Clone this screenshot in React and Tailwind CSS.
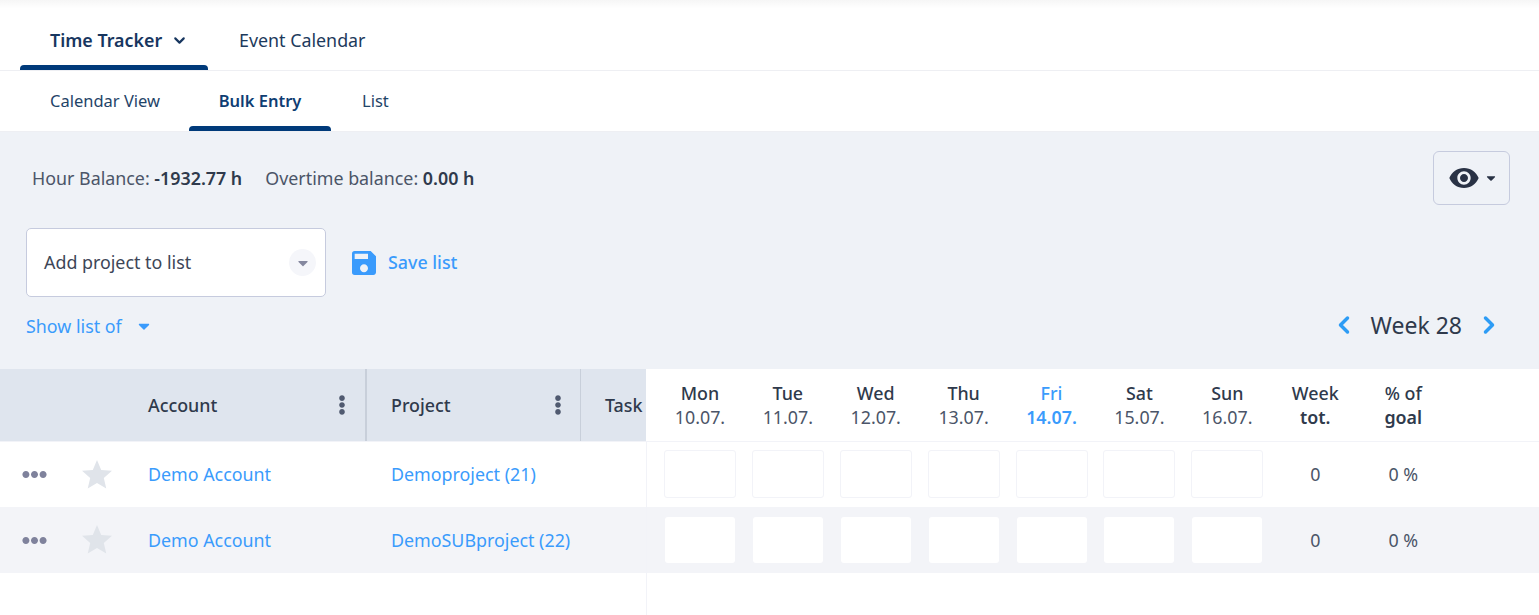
import { ChevronDown, ChevronLeft, ChevronRight } from "lucide-react";
import { FaCaretDown, FaEllipsisH, FaEllipsisV } from "react-icons/fa";
import { MdSave, MdVisibility } from "react-icons/md";

const days = [
  { name: "Mon", date: "10.07." },
  { name: "Tue", date: "11.07." },
  { name: "Wed", date: "12.07." },
  { name: "Thu", date: "13.07." },
  { name: "Fri", date: "14.07.", today: true },
  { name: "Sat", date: "15.07." },
  { name: "Sun", date: "16.07." },
];

const rows = [
  { account: "Demo Account", project: "Demoproject (21)" },
  { account: "Demo Account", project: "DemoSUBproject (22)", striped: true },
];

function TabBar() {
  return <div className="absolute inset-x-0 bottom-0 h-[5px] rounded-t-[4px] bg-[#003a7a]" />;
}

function Star() {
  return (
    <svg viewBox="0 0 24 24" className="h-[36px] w-[36px] fill-[#e0e4ea]">
      <path d="M12 17.27L18.18 21l-1.64-7.03L22 9.24l-7.19-.61L12 2 9.19 8.63 2 9.24l5.46 4.73L5.82 21z" />
    </svg>
  );
}

function DataRow({ row }) {
  return (
    <div className={`flex h-[66px] items-center ${row.striped ? "bg-[#f3f4f8]" : "bg-white border-t border-[#f2f3f8]"}`}>
      <div className="flex h-full w-[647px] shrink-0 items-center border-r border-[#f2f3f8] text-[#3a9bfc]">
        <div className="flex w-[68px] justify-center text-[#7f829c]">
          <FaEllipsisH className="h-[25px] w-[25px]" />
        </div>
        <div className="flex w-[80px] pl-[11px]">
          <Star />
        </div>
        <div className="w-[243px]">{row.account}</div>
        <div>{row.project}</div>
      </div>
      <div className="flex items-center pl-[9px]">
        {days.map((day) => (
          <div key={day.name} className="flex w-[87.9px] justify-center">
            {row.striped ? (
              <div className="h-[46px] w-[70px] rounded-[3px] bg-white" />
            ) : (
              <div className="mb-[2px] h-[48px] w-[72px] rounded-[3px] border border-[#f2f3f8] bg-white" />
            )}
          </div>
        ))}
        <div className="flex w-[88px] justify-center text-[#4b5568]">0</div>
        <div className="flex w-[88px] justify-center text-[#4b5568]">0 %</div>
      </div>
    </div>
  );
}

export default function App() {
  return (
    <div className="flex h-[615px] flex-col overflow-hidden bg-white font-['Noto_Sans',sans-serif] text-[17.85px] text-[#293450]">
      {/* Top navigation */}
      <div className="flex h-[71px] border-b border-[#eeeff3] bg-gradient-to-b from-[#f6f6f6] to-white to-[12%] pl-[20px]">
        <div className="relative flex w-[188px] items-center gap-[9px] pl-[30px] pt-[10px] font-semibold text-[#17365f]">
          Time Tracker
          <ChevronDown className="h-[17px] w-[17px]" strokeWidth={3} />
          <TabBar />
        </div>
        <div className="flex items-center pl-[31px] pt-[10px] text-[#1d3a5c]">Event Calendar</div>
      </div>

      {/* Sub navigation */}
      <div className="flex h-[60px] pl-[20px] text-[16.5px] text-[#1f4468]">
        <div className="flex w-[169px] items-center pl-[30px]">Calendar View</div>
        <div className="relative flex w-[142px] items-center justify-center font-semibold text-[#0f3d73]">
          Bulk Entry
          <TabBar />
        </div>
        <div className="flex items-center pl-[31px]">List</div>
      </div>

      {/* Filters */}
      <div className="flex h-[238px] flex-col border-t border-[#eeeff3] bg-[#eff2f7] px-[26px]">
        <div className="flex items-start justify-between pr-[3px] pt-[19px]">
          <div className="flex h-[54px] items-center gap-[23px] pl-[6px] text-[#4b5568]">
            <span>
              Hour Balance: <span className="font-semibold text-[#2f3a4c]">-1932.77 h</span>
            </span>
            <span>
              Overtime balance: <span className="font-semibold text-[#2f3a4c]">0.00 h</span>
            </span>
          </div>
          <div className="flex h-[54px] w-[77px] items-center justify-center gap-[6px] rounded-[6px] border border-[#c6cbde] text-[#293245]">
            <MdVisibility className="h-[32px] w-[32px]" />
            <FaCaretDown className="h-[14px] w-[10px]" />
          </div>
        </div>
        <div className="mt-[23px] flex items-center">
          <div className="flex h-[69px] w-[300px] items-center justify-between rounded-[5px] border border-[#c6cbde] bg-white pl-[17px] pr-[9px] text-[#3d4657]">
            Add project to list
            <div className="flex h-[27px] w-[27px] items-center justify-center rounded-full bg-[#f5f6fa] text-[#85889f]">
              <FaCaretDown className="h-[16px] w-[16px]" />
            </div>
          </div>
          <div className="ml-[22px] flex items-center gap-[8px] font-medium text-[#3a9bfc]">
            <MdSave className="h-[32px] w-[32px]" />
            Save list
          </div>
        </div>
        <div className="mt-[11px] flex items-center justify-between pr-[10px]">
          <div className="flex items-center gap-[14px] text-[#3a9bfc]">
            Show list of
            <FaCaretDown className="h-[18px] w-[16px]" />
          </div>
          <div className="flex items-center gap-[13px] pb-[2px] text-[23px] text-[#2f3a4c]">
            <ChevronLeft className="h-[28px] w-[28px] text-[#2d9cf5]" strokeWidth={3} />
            Week 28
            <ChevronRight className="h-[28px] w-[28px] text-[#2d9cf5]" strokeWidth={3} />
          </div>
        </div>
      </div>

      {/* Table header */}
      <div className="flex h-[72px] items-center bg-white">
        <div className="flex h-full w-[646px] shrink-0 items-center overflow-hidden bg-[#dfe5ee] font-medium text-[#2f3a4c]">
          <div className="w-[148px]" />
          <div className="flex h-full w-[219px] items-center justify-between border-r-2 border-[#c8cfda] pr-[13px]">
            Account
            <FaEllipsisV className="h-[20px] w-[20px] text-[#505a70]" />
          </div>
          <div className="flex h-full w-[214px] items-center justify-between border-r border-[#c8cfda] pl-[24px] pr-[12px]">
            Project
            <FaEllipsisV className="h-[20px] w-[20px] text-[#505a70]" />
          </div>
          <div className="pl-[24px]">Task</div>
        </div>
        <div className="flex pl-[10px] leading-[24px]">
          {days.map((day) => (
            <div key={day.name} className={`flex w-[87.9px] flex-col items-center ${day.today ? "text-[#3a9bfc]" : "text-[#2f3a4c]"}`}>
              <span className="font-medium">{day.name}</span>
              <span className={day.today ? "font-semibold" : "text-[#4b5568]"}>{day.date}</span>
            </div>
          ))}
          <div className="flex w-[88px] flex-col items-center font-semibold text-[#2f3a4c]">
            <span className="font-medium">Week</span>
            <span>tot.</span>
          </div>
          <div className="flex w-[88px] flex-col items-center font-semibold text-[#2f3a4c]">
            <span className="font-medium">% of</span>
            <span>goal</span>
          </div>
        </div>
      </div>

      {rows.map((row) => (
        <DataRow key={row.project} row={row} />
      ))}

      <div className="w-[647px] flex-1 border-r border-[#f2f3f8]" />
    </div>
  );
}
